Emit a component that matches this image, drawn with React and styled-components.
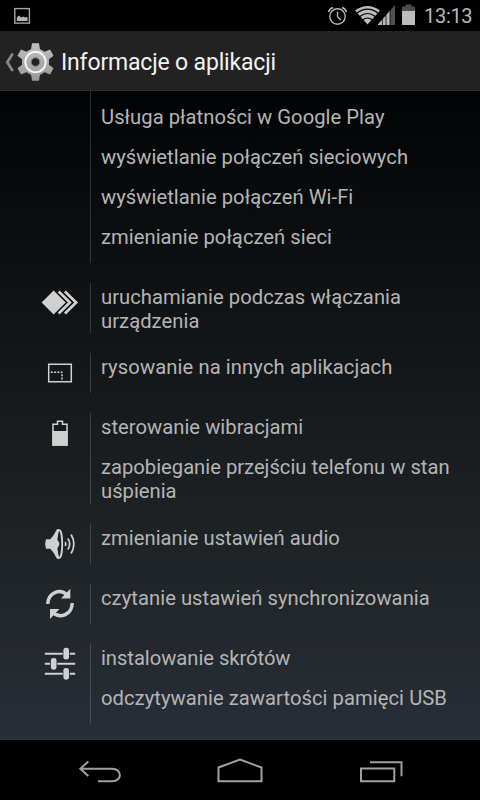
import React from "react";
import styled, { createGlobalStyle } from "styled-components";

const GlobalStyle = createGlobalStyle`
  body {
    margin: 0;
    background: #000;
    overflow: hidden;
    font-family: Roboto, "Noto Sans", sans-serif;
  }

  svg {
    display: block;
  }
`;

const Screen = styled.div`
  display: flex;
  flex-direction: column;
  width: 480px;
  height: 800px;
  background-color: #000;
`;

const StatusBar = styled.header`
  display: flex;
  align-items: center;
  justify-content: space-between;
  flex: 0 0 31px;
  height: 31px;
`;

const Clock = styled.span`
  box-sizing: border-box;
  width: 56px;
  height: 31px;
  padding-top: 2px;
  color: #b9b9b9;
  font-size: 20px;
  line-height: 29px;
  letter-spacing: -0.3px;
`;

const StatusIcons = styled.div`
  display: flex;
`;

const ActionBar = styled.div`
  display: flex;
  align-items: center;
  box-sizing: border-box;
  flex: 0 0 60px;
  background-color: #222;
  border-bottom: 1px solid #2b2c2c;
`;

const Title = styled.h1`
  margin: 3px 0 0 1px;
  color: #f1f1f1;
  font-size: 23px;
  font-weight: 400;
  line-height: 31px;
  letter-spacing: -0.17px;
  white-space: nowrap;
`;

const Content = styled.main`
  display: flex;
  flex-direction: column;
  gap: 20px;
  flex: 0 0 649px;
  overflow: hidden;
  background: linear-gradient(#020304, #101214 32%, #191d20 55%, #22272b 80%, #292d37);
`;

const Group = styled.section`
  display: flex;
`;

const IconCell = styled.div`
  display: flex;
  justify-content: center;
  width: 60px;
  padding-left: 30px;
`;

const Permissions = styled.div`
  box-sizing: border-box;
  width: 389px;
  padding-top: ${(props) => props.$top || 0}px;
  border-left: 1px solid rgba(255, 255, 255, 0.16);
`;

const Permission = styled.p`
  box-sizing: border-box;
  height: ${(props) => props.$height || 40}px;
  margin: 0 0 0 10px;
  padding-top: 3px;
  color: #b4b5b5;
  font-size: 20.2px;
  line-height: 23.5px;
  letter-spacing: ${(props) => props.$spacing || 0}px;
  white-space: pre-line;
`;

const NavBar = styled.nav`
  display: flex;
  align-items: center;
  justify-content: center;
  flex: 0 0 60px;
  background-color: #000;
`;

function PictureIcon() {
  return (
    <svg width="40" height="31" fill="none">
      <rect x="14.8" y="8.6" width="14.6" height="14.5" stroke="#a5a5a5" strokeWidth="1.4" />
      <path d="M16.8 21v-3.5l2.2-2 2 2 2.2-1 1.8 1 2.6-.5v4z" fill="#b4b4b4" />
    </svg>
  );
}

function SystemIcons() {
  return (
    <svg width="104" height="31" fill="none">
      <g stroke="#b4b4b4" strokeWidth="1.4">
        <circle cx="17.5" cy="16.5" r="7.7" />
        <path d="M17.5 11.5v5.2l3.3 3.3" />
        <path d="M8.5 12Q9.5 8.8 13 7.5M22 7.5q3.5 1.3 4.5 4.5" strokeWidth="1.8" />
      </g>
      <path d="M35 10.5Q47.5 1.5 60 10.5L47.5 24.6z" fill="#bcbcbc" />
      <g stroke="#000" strokeWidth="1.2">
        <path d="M36.8 13.2q10.7-8 21.4 0" />
        <path d="M39.8 16.5q7.7-6 15.4 0" />
        <path d="M42.8 19.8q4.7-3.6 9.4 0" />
      </g>
      <path d="M57.5 25L75 5v20z" fill="#505050" />
      <path d="M57.5 25L70 10.7V25z" fill="#bcbcbc" />
      <path d="M62.4 19v6M66 15v10M70 10v15" stroke="#000" strokeWidth=".8" />
      <path d="M82 6.5h3.5v-2h6v2H95V11H82z" fill="#4d4d4d" />
      <path d="M82 11h13v14H82z" fill="#bcbcbc" />
    </svg>
  );
}

function SettingsLogo() {
  const teeth = [0, 60, 120, 180, 240, 300];
  return (
    <svg width="60" height="58" fill="none">
      <defs>
        <linearGradient id="gear" x1="0" y1="0" x2="0" y2="1">
          <stop offset="0" stopColor="#c2c2c2" />
          <stop offset="1" stopColor="#969696" />
        </linearGradient>
        <mask id="teeth">
          <circle cx="35.5" cy="30" r="13.6" fill="#fff" />
          {teeth.map((angle) => (
            <path
              key={angle}
              d="M30.8 19l1.2-7.8h7L40.2 19z"
              fill="#fff"
              transform={`rotate(${angle} 35.5 30)`}
            />
          ))}
          <circle cx="35.5" cy="30" r="4" fill="#000" />
        </mask>
      </defs>
      <path d="M12.8 21.5L7.3 30.3l5.5 8.7" stroke="#858585" strokeWidth="2.8" />
      <rect x="16" y="10" width="39" height="40" fill="url(#gear)" mask="url(#teeth)" />
      <circle cx="35.5" cy="30" r="10.2" stroke="#f5f5f5" strokeWidth="1.9" />
      <circle cx="35.5" cy="30" r="4.3" stroke="#747474" strokeWidth="1" />
    </svg>
  );
}

const drawings = {
  startup: (
    <>
      <path d="M34.9 8.4l11.2 11.1-11.2 11.1" stroke="#d0d0d0" strokeWidth="2.8" />
      <path d="M28.6 8.4l11.2 11.1-11.2 11.1" stroke="#121416" strokeWidth="5.4" />
      <path d="M28.6 8.4l11.2 11.1-11.2 11.1" stroke="#d0d0d0" strokeWidth="2.8" />
      <path d="M23.5 7.3l12.2 12.2-12.2 12.2" stroke="#121416" strokeWidth="2.6" />
      <path d="M23.6 7.5l12 12-12 12-12-12z" fill="#d0d0d0" />
    </>
  ),
  overlay: (
    <>
      <path d="M18.7 11.2h22.6v17.6H18.7z" stroke="#d0d0d0" strokeWidth="1.5" />
      <path d="M20.8 19.2h11.8M32 21.3v6" stroke="#d0d0d0" strokeWidth="1.5" strokeDasharray="2 1.3" />
    </>
  ),
  battery: (
    <>
      <path d="M23 11.3h4.5v-3h5v3H37v20.8H23z" stroke="#d0d0d0" strokeWidth="1.5" />
      <path d="M22.3 18h15.4v14.8H22.3z" fill="#d0d0d0" />
    </>
  ),
  audio: (
    <>
      <path d="M16 15.2h4.3Q24 11.5 26.3 6.2q.8-1.4 2.7-1.2v30q-1.9.2-2.7-1.2-2.3-5.3-6-9H16q-1.8-4.8 0-9.6z" fill="#d0d0d0" />
      <ellipse cx="29.3" cy="20" rx="2.9" ry="13.8" fill="#1d2124" stroke="#d0d0d0" strokeWidth="1.8" />
      <path d="M27 15.5q4.6 4.5 0 9z" fill="#d0d0d0" />
      <path d="M35.2 18q1.2 2 0 4M37.7 14.5q4 5.5 0 11M41.1 10.5q5.5 9.5 0 19" stroke="#d0d0d0" strokeWidth="1.7" />
    </>
  ),
  sync: (
    <>
      <path d="M17.8 20c.3-11.4 12.2-16 19.4-9M42.2 19c0 11.6-12.2 16.2-19.4 9.4" stroke="#d0d0d0" strokeWidth="3.4" />
      <path d="M40.3 4.8v9.7H31zM20 34.9v-10h9.4z" fill="#d0d0d0" />
    </>
  ),
  tools: (
    <>
      <path
        d="M14.8 9.7h18M39.8 9.7h5.4M14.8 19.8h5.2M27.3 19.8h17.9M14.8 29.8h18M39.8 29.8h5.4"
        stroke="#d0d0d0"
        strokeWidth="2"
      />
      <rect x="33.4" y="3.8" width="5.6" height="11.8" rx="2.4" fill="#d0d0d0" />
      <rect x="20.9" y="13.9" width="5.6" height="11.8" rx="2.4" fill="#d0d0d0" />
      <rect x="33.4" y="23.9" width="5.6" height="11.8" rx="2.4" fill="#d0d0d0" />
    </>
  ),
};

const groups = [
  {
    top: 12,
    items: [
      { text: "Usługa płatności w Google Play", spacing: 0.04 },
      { text: "wyświetlanie połączeń sieciowych", spacing: 0.03 },
      { text: "wyświetlanie połączeń Wi-Fi", spacing: 0.04 },
      { text: "zmienianie połączeń sieci", spacing: 0.03 },
    ],
  },
  {
    icon: "startup",
    items: [{ text: "uruchamianie podczas włączania\nurządzenia", height: 50, spacing: 0.05 }],
  },
  { icon: "overlay", items: [{ text: "rysowanie na innych aplikacjach", spacing: 0.1 }] },
  {
    icon: "battery",
    items: [
      { text: "sterowanie wibracjami", spacing: 0.03 },
      { text: "zapobieganie przejściu telefonu w stan\nuśpienia", height: 51 },
    ],
  },
  { icon: "audio", items: [{ text: "zmienianie ustawień audio", spacing: 0.03 }] },
  { icon: "sync", items: [{ text: "czytanie ustawień synchronizowania", spacing: 0.05 }] },
  {
    icon: "tools",
    items: [
      { text: "instalowanie skrótów", spacing: -0.04 },
      { text: "odczytywanie zawartości pamięci USB", spacing: 0.05 },
    ],
  },
];

function PermissionGroup({ group }) {
  return (
    <Group>
      <IconCell>
        {group.icon && (
          <svg width="60" height="40" fill="none">
            {drawings[group.icon]}
          </svg>
        )}
      </IconCell>
      <Permissions $top={group.top}>
        {group.items.map((item) => (
          <Permission key={item.text} $height={item.height} $spacing={item.spacing}>
            {item.text}
          </Permission>
        ))}
      </Permissions>
    </Group>
  );
}

function Navigation() {
  return (
    <NavBar>
      <svg width="80" height="60" fill="none" stroke="#a0a0a0" strokeWidth="2">
        <path d="M28.3 21.5l-8 7.2 8 7.2M20.5 28.7H52c10.5 0 10.5 12.6 0 12.6H38" />
      </svg>
      <svg width="200" height="60" fill="none" stroke="#a0a0a0" strokeWidth="2">
        <path d="M78.5 41.3V27.5l21.5-8 21.5 8v13.8z" />
      </svg>
      <svg width="80" height="60" fill="none" stroke="#a0a0a0" strokeWidth="2">
        <path d="M21 28.5h33.3v12.8H21zM30 22.3h31.5v14" />
      </svg>
    </NavBar>
  );
}

function App() {
  return (
    <Screen>
      <GlobalStyle />
      <StatusBar>
        <PictureIcon />
        <StatusIcons>
          <SystemIcons />
          <Clock>13:13</Clock>
        </StatusIcons>
      </StatusBar>
      <ActionBar>
        <SettingsLogo />
        <Title>Informacje o aplikacji</Title>
      </ActionBar>
      <Content>
        {groups.map((group) => (
          <PermissionGroup key={group.items[0].text} group={group} />
        ))}
      </Content>
      <Navigation />
    </Screen>
  );
}

export default App;
